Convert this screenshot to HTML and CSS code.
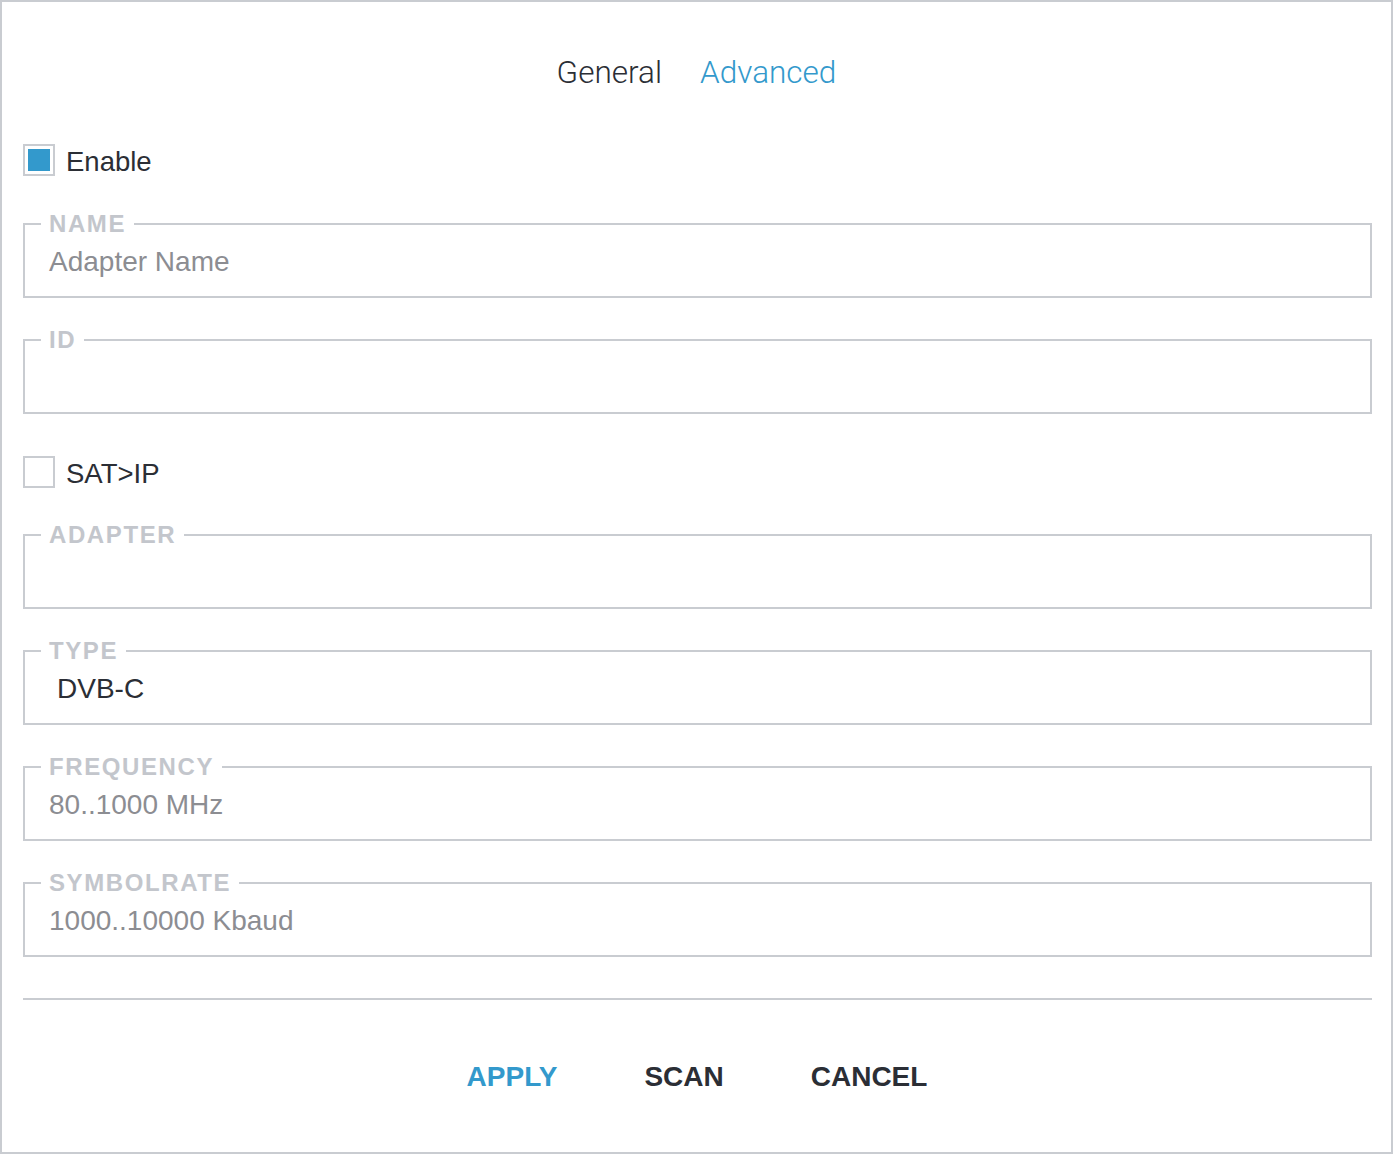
FILE: index.html
```html
<!DOCTYPE html>
<html lang="en">
<head>
<meta charset="utf-8">
<title>Adapter</title>
<link rel="stylesheet" href="styles.css">
</head>
<body>
<div class="dialog">
  <nav class="tabs">
    <span class="tab">General</span>
    <span class="tab tab-active">Advanced</span>
  </nav>

  <label class="check-row row-enable">
    <span class="checkbox checked"><span class="checkbox-fill"></span></span>
    <span class="check-label">Enable</span>
  </label>

  <fieldset class="field field-first">
    <legend class="field-legend">NAME</legend>
    <div class="field-value placeholder">Adapter Name</div>
  </fieldset>

  <fieldset class="field">
    <legend class="field-legend">ID</legend>
    <div class="field-value"></div>
  </fieldset>

  <label class="check-row row-satip">
    <span class="checkbox"></span>
    <span class="check-label">SAT&gt;IP</span>
  </label>

  <fieldset class="field field-first">
    <legend class="field-legend">ADAPTER</legend>
    <div class="field-value"></div>
  </fieldset>

  <fieldset class="field">
    <legend class="field-legend">TYPE</legend>
    <div class="field-value select-value">DVB-C</div>
  </fieldset>

  <fieldset class="field">
    <legend class="field-legend">FREQUENCY</legend>
    <div class="field-value placeholder">80..1000 MHz</div>
  </fieldset>

  <fieldset class="field">
    <legend class="field-legend">SYMBOLRATE</legend>
    <div class="field-value placeholder">1000..10000 Kbaud</div>
  </fieldset>

  <div class="divider"></div>

  <div class="actions">
    <span class="action action-primary">APPLY</span>
    <span class="action">SCAN</span>
    <span class="action">CANCEL</span>
  </div>
</div>
</body>
</html>
```

FILE: styles.css
```css
html, body {
  margin: 0;
  padding: 0;
  background: #ffffff;
}

body {
  font-family: "Liberation Sans", Arial, sans-serif;
  color: #2b2e35;
}

.dialog {
  box-sizing: border-box;
  height: 1154px;
  border: 2px solid #c9ccd1;
  padding: 0 19px 0 21px;
  display: flex;
  flex-direction: column;
}

.tabs {
  display: flex;
  justify-content: center;
  gap: 38px;
  padding-top: 51px;
  padding-right: 2px;
}

.tab {
  font-family: Roboto, "Liberation Sans", sans-serif;
  font-weight: 300;
  font-size: 31.5px;
  line-height: 40px;
  color: #2b2e35;
}

.tab-active {
  color: #3399cc;
}

.check-row {
  display: flex;
  align-items: center;
  gap: 11px;
  height: 32px;
}

.row-enable {
  margin-top: 51px;
}

.row-satip {
  margin-top: 42px;
}

.checkbox {
  box-sizing: border-box;
  width: 32px;
  height: 32px;
  border: 2px solid #c9ccd1;
  padding: 3px;
  display: block;
}

.checkbox-fill {
  display: block;
  width: 22px;
  height: 22px;
  background: #3399cc;
}

.check-label {
  font-size: 27.5px;
  line-height: 32px;
  color: #2b2e35;
  padding-top: 4px;
}

.field {
  margin: 31px 0 0 0;
  padding: 0 16px 7px 16px;
  border: 2px solid #c9ccd1;
  min-width: 0;
}

.field-first {
  margin-top: 37px;
}

.row-satip + .field-first {
  margin-top: 36px;
}

.field-legend {
  padding: 0 8px;
  font-size: 24px;
  line-height: 22px;
  font-weight: 700;
  letter-spacing: 1.6px;
  color: #c3c6cc;
}

.field-value {
  height: 54px;
  line-height: 54px;
  padding-left: 8px;
  font-size: 28px;
  color: #2b2e35;
}

.placeholder {
  color: #8c8d92;
}

.select-value {
  padding-left: 16px;
}

.divider {
  margin-top: 41px;
  height: 2px;
  background: #c9ccd1;
}

.actions {
  flex: 1;
  display: flex;
  justify-content: center;
  align-items: center;
  gap: 87px;
  padding-top: 2px;
  padding-right: 1px;
}

.action {
  font-size: 28px;
  font-weight: 700;
  color: #2b2e35;
}

.action-primary {
  color: #3399cc;
}
```
